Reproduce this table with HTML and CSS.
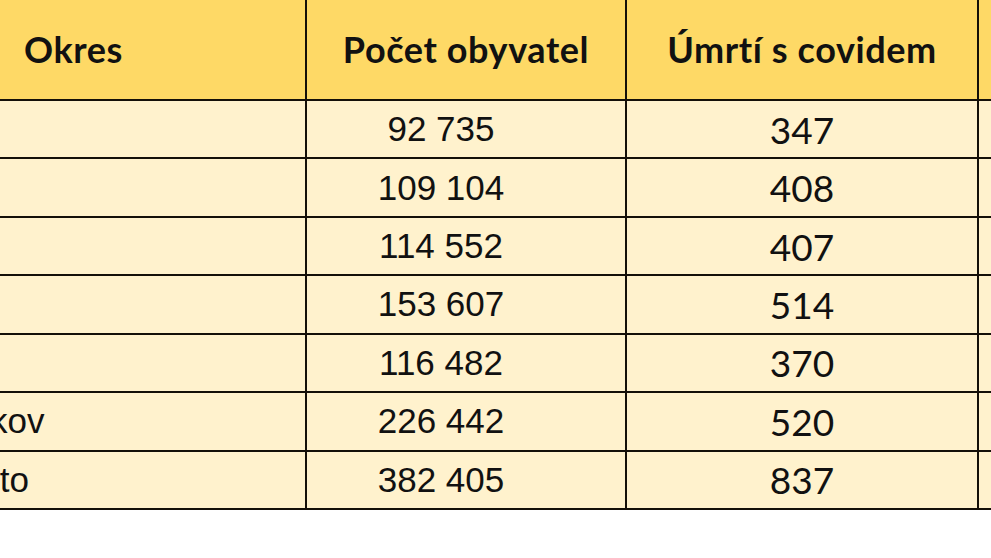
FILE: index.html
```html
<!DOCTYPE html>
<html lang="cs">
<head>
<meta charset="utf-8">
<title>Okresy</title>
<link rel="stylesheet" href="styles.css">
</head>
<body>
<div class="table">
  <div class="cell head">Okres</div>
  <div class="cell head">Počet obyvatel</div>
  <div class="cell head">Úmrtí s covidem</div>
  <div class="cell head"></div>

  <div class="cell name">Vyškov</div>
  <div class="cell pop">92 735</div>
  <div class="cell deaths">347</div>
  <div class="cell"></div>

  <div class="cell name">Blansko</div>
  <div class="cell pop">109 104</div>
  <div class="cell deaths">408</div>
  <div class="cell"></div>

  <div class="cell name">Znojmo</div>
  <div class="cell pop">114 552</div>
  <div class="cell deaths">407</div>
  <div class="cell"></div>

  <div class="cell name">Hodonín</div>
  <div class="cell pop">153 607</div>
  <div class="cell deaths">514</div>
  <div class="cell"></div>

  <div class="cell name">Břeclav</div>
  <div class="cell pop">116 482</div>
  <div class="cell deaths">370</div>
  <div class="cell"></div>

  <div class="cell name">Brno-venkov</div>
  <div class="cell pop">226 442</div>
  <div class="cell deaths">520</div>
  <div class="cell"></div>

  <div class="cell name">Brno-město</div>
  <div class="cell pop">382 405</div>
  <div class="cell deaths">837</div>
  <div class="cell"></div>
</div>
</body>
</html>
```

FILE: styles.css
```css
html, body {
  margin: 0;
  padding: 0;
  background: #ffffff;
  overflow: hidden;
}

.table {
  display: grid;
  grid-template-columns: 463px 318px 350px 12px;
  grid-template-rows: 99px repeat(7, 56.43px);
  gap: 2px;
  background: #141008;
  padding-bottom: 2px;
  margin-left: -158px;
  width: max-content;
  color: #111;
}

.cell {
  display: flex;
  align-items: center;
  justify-content: center;
  background: #fff2cd;
  font-family: "Liberation Sans", Arial, sans-serif;
  font-size: 35px;
  white-space: nowrap;
  overflow: hidden;
}

.head {
  background: #fed966;
  font-family: Lato, "Noto Sans", sans-serif;
  font-weight: 700;
  font-size: 36px;
  letter-spacing: 0.6px;
  padding-bottom: 2px;
}

.name {
  justify-content: flex-start;
  padding-left: 6px;
}

.pop {
  padding-right: 50px;
}

.deaths {
  font-family: Lato, "Noto Sans", sans-serif;
  font-size: 37px;
}
```
